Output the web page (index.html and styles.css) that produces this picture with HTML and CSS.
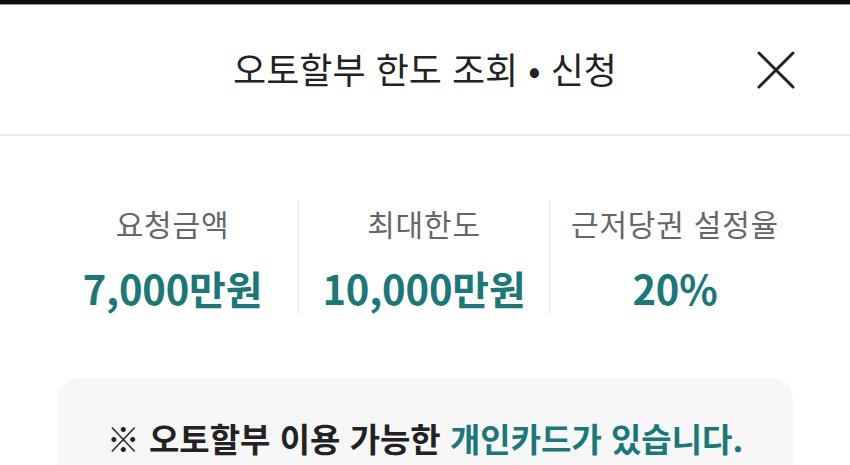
FILE: index.html
```html
<!DOCTYPE html>
<html lang="ko">
<head>
<meta charset="utf-8">
<link rel="stylesheet" href="styles.css">
</head>
<body>
<div class="topbar"></div>
<header class="header">
  <div class="spacer"></div>
  <h1 class="title">오토할부 한도 조회 • 신청</h1>
  <button class="close" aria-label="닫기">
    <svg viewBox="0 0 40 40" width="40" height="40"><path d="M3 3 L37 37 M37 3 L3 37" stroke="#222" stroke-width="3" stroke-linecap="round" fill="none"/></svg>
  </button>
</header>
<main class="content">
  <section class="stats">
    <div class="stat">
      <div class="label">요청금액</div>
      <div class="value">7,000만원</div>
    </div>
    <div class="stat">
      <div class="label">최대한도</div>
      <div class="value">10,000만원</div>
    </div>
    <div class="stat">
      <div class="label">근저당권 설정율</div>
      <div class="value">20%</div>
    </div>
  </section>
  <section class="notice">
    <p class="notice-text">※ 오토할부 이용 가능한 <span class="accent">개인카드가 있습니다.</span></p>
  </section>
</main>
</body>
</html>
```
FILE: styles.css
```css
* { box-sizing: border-box; }
html, body { margin: 0; padding: 0; }
body {
  width: 850px;
  height: 465px;
  overflow: hidden;
  background: #fff;
  font-family: "Noto Sans CJK KR", "Noto Sans", sans-serif;
  color: #222;
}
.topbar {
  height: 5px;
  background: #0c0c0c;
  border-bottom: 1px solid #9a9a9a;
}
.header {
  height: 131px;
  display: grid;
  grid-template-columns: 1fr auto 1fr;
  align-items: center;
  border-bottom: 2px solid #ededed;
}
.title {
  margin: 0;
  font-size: 36px;
  font-weight: 400;
  color: #222;
  line-height: 1;
  padding-bottom: 4px;
}
.close {
  justify-self: end;
  margin-right: 54px;
  padding: 0;
  border: 0;
  background: none;
  width: 40px;
  height: 40px;
  display: flex;
}
.content {
  padding: 64px 57px 0;
}
.stats {
  display: grid;
  grid-template-columns: repeat(3, 1fr);
  margin: 0 -7px 0 -10px;
}
.stat {
  display: flex;
  flex-direction: column;
  align-items: center;
  padding: 2px 0 4px;
}
.stat + .stat {
  border-left: 1.5px solid #ececec;
}
.label {
  font-size: 30px;
  color: #666;
  line-height: 42px;
  letter-spacing: 0.8px;
}
.value {
  margin-top: 22px;
  font-size: 40px;
  font-weight: 700;
  color: #1b7878;
  line-height: 44px;
  letter-spacing: -0.2px;
}
.notice {
  margin-top: 64px;
  background: #f7f7f7;
  border-radius: 22px 22px 0 0;
  height: 120px;
  padding-top: 40px;
}
.notice-text {
  margin: 0;
  text-align: center;
  font-size: 33px;
  font-weight: 700;
  color: #222;
  line-height: 40px;
}
.accent { color: #1b7878; }
```
